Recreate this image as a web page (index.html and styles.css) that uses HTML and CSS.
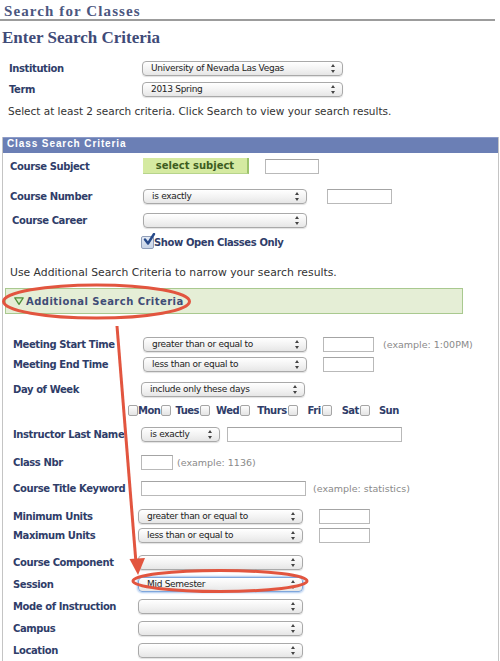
FILE: index.html
```html
<!DOCTYPE html>
<html lang="en">
<head>
    <meta charset="UTF-8">
    <title>Search for Classes</title>
    <link rel="stylesheet" href="styles.css">
</head>
<body>

    <div class="page">
        <h1 class="title">Search for Classes</h1>
        <h2 class="subtitle">Enter Search Criteria</h2>

        <div class="top-form">
            <div class="frow">
                <span class="lbl">Institution</span>
                <div class="sel w201"><span>University of Nevada Las Vegas</span><i class="arr"></i></div>
            </div>
            <div class="frow">
                <span class="lbl">Term</span>
                <div class="sel w201"><span>2013 Spring</span><i class="arr"></i></div>
            </div>
        </div>
        <p class="note">Select at least 2 search criteria. Click Search to view your search results.</p>

        <div class="box">
            <div class="box-head">Class Search Criteria</div>
            <div class="box-body">

                <div class="row">
                    <span class="lbl">Course Subject</span>
                    <div class="btn-green">select subject</div>
                    <div class="inp w54 ml16"></div>
                </div>
                <div class="row sp10">
                    <span class="lbl">Course Number</span>
                    <div class="sel w164"><span>is exactly</span><i class="arr"></i></div>
                    <div class="inp w65 ml20"></div>
                </div>
                <div class="row sp4">
                    <span class="lbl indent">Course Career</span>
                    <div class="sel w164"><span></span><i class="arr"></i></div>
                </div>
                <div class="row sp2">
                    <span class="lbl"></span>
                    <span class="check on">
                        <svg width="14" height="14" viewBox="0 0 14 14"><path d="M3 6.5 L6 10.5 L12 1" fill="none" stroke="#274a8a" stroke-width="2.4" stroke-linecap="round" stroke-linejoin="round"/></svg>
                    </span>
                    <span class="lbl-inline">Show Open Classes Only</span>
                </div>
                <div class="row sp10">
                    <span class="text">Use Additional Search Criteria to narrow your search results.</span>
                </div>

                <div class="more">
                    <svg class="tri" width="10" height="8" viewBox="0 0 10 8"><path d="M0.8 0.8 H9.2 L5 7.3 Z" fill="#d9ecc4" stroke="#4f8f3a" stroke-width="1.3" stroke-linejoin="round"/></svg>
                    <span>Additional Search Criteria</span>
                </div>

                <div class="extra">
                    <div class="row first">
                        <span class="lbl">Meeting Start Time</span>
                        <div class="sel w164"><span>greater than or equal to</span><i class="arr"></i></div>
                        <div class="inp w51 ml16"></div>
                        <span class="hint ml9">(example: 1:00PM)</span>
                    </div>
                    <div class="row sp0">
                        <span class="lbl">Meeting End Time</span>
                        <div class="sel w164"><span>less than or equal to</span><i class="arr"></i></div>
                        <div class="inp w51 ml16"></div>
                    </div>

                    <div class="mid">
                        <div class="row sp5">
                            <span class="lbl">Day of Week</span>
                            <div class="sel w164"><span>include only these days</span><i class="arr"></i></div>
                        </div>
                        <div class="days">
                            <i class="box-cb"></i><b class="d0">Mon</b>
                            <i class="box-cb"></i><b class="d4">Tues</b>
                            <i class="box-cb"></i><b class="d6">Wed</b>
                            <i class="box-cb"></i><b class="d7">Thurs</b>
                            <i class="box-cb"></i><b class="d10">Fri</b>
                            <i class="box-cb"></i><b class="d10">Sat</b>
                            <i class="box-cb"></i><b class="d9">Sun</b>
                        </div>
                        <div class="row sp4">
                            <span class="lbl">Instructor Last Name</span>
                            <div class="sel w79"><span>is exactly</span><i class="arr"></i></div>
                            <div class="inp w175 ml7"></div>
                        </div>
                        <div class="row sp8">
                            <span class="lbl">Class Nbr</span>
                            <div class="inp w32"></div>
                            <span class="hint ml4">(example: 1136)</span>
                        </div>
                        <div class="row sp6">
                            <span class="lbl">Course Title Keyword</span>
                            <div class="inp w165"></div>
                            <span class="hint ml7">(example: statistics)</span>
                        </div>
                    </div>

                    <div class="low">
                        <div class="row sp8">
                            <span class="lbl">Minimum Units</span>
                            <div class="sel w165"><span>greater than or equal to</span><i class="arr"></i></div>
                            <div class="inp w51 ml16"></div>
                        </div>
                        <div class="row tight">
                            <span class="lbl">Maximum Units</span>
                            <div class="sel w165"><span>less than or equal to</span><i class="arr"></i></div>
                            <div class="inp w51 ml16"></div>
                        </div>
                        <div class="row sp7">
                            <span class="lbl">Course Component</span>
                            <div class="sel w165"><span></span><i class="arr"></i></div>
                        </div>
                        <div class="row sp2">
                            <span class="lbl">Session</span>
                            <div class="sel w165 focus"><span>Mid Semester</span><i class="arr"></i></div>
                        </div>
                        <div class="row sp2">
                            <span class="lbl">Mode of Instruction</span>
                            <div class="sel w165"><span></span><i class="arr"></i></div>
                        </div>
                        <div class="row sp2">
                            <span class="lbl">Campus</span>
                            <div class="sel w165"><span></span><i class="arr"></i></div>
                        </div>
                        <div class="row sp2">
                            <span class="lbl">Location</span>
                            <div class="sel w165"><span></span><i class="arr"></i></div>
                        </div>
                    </div>
                </div>

            </div>
        </div>

        <!-- red annotation marks drawn on top of the form -->
        <svg class="marks" width="500" height="661" viewBox="0 0 500 661">
            <ellipse cx="96.5" cy="301.5" rx="93" ry="16.5" fill="none" stroke="#e2553f" stroke-width="3"/>
            <path d="M117 326 L136 563" stroke="#e2553f" stroke-width="3" fill="none"/>
            <path d="M129.5 559 L145 558 L138 575 Z" fill="#e2553f"/>
            <ellipse cx="220" cy="581" rx="87" ry="10.5" fill="none" stroke="#e2553f" stroke-width="3"/>
        </svg>
    </div>

</body>
</html>
```

FILE: styles.css
```css
body{
    margin: 0;
    background: #fff;
    font-family: "DejaVu Sans", Verdana, sans-serif;
    color: #333;
}

.page{
    position: relative;
    width: 500px;
    height: 661px;
    overflow: hidden;
}

.title{
    margin: 0 5px 0 0;
    padding: 3px 0 0 4px;
    height: 16px;
    font: bold 15px "Liberation Serif", serif;
    letter-spacing: 1.1px;
    line-height: 16px;
    color: #4b5680;
    border-bottom: 2px solid #9c9c9c;
}

.subtitle{
    margin: 7px 0 0 2px;
    font: bold 17px "Liberation Serif", serif;
    color: #3f4b78;
    line-height: 20px;
}

.top-form{
    margin-top: 10px;
    padding-left: 9px;
}

.frow{
    display: flex;
    align-items: center;
    height: 20px;
    margin-bottom: 1px;
}

.frow .lbl{
    width: 133px;
}

.lbl{
    flex: none;
    box-sizing: border-box;
    width: 133px;
    font-size: 10px;
    font-weight: bold;
    letter-spacing: -0.4px;
    color: #2f3d69;
}

.lbl.indent{
    padding-left: 2px;
}

.note{
    margin: 2px 0 0 8px;
    font-size: 10.5px;
    color: #333;
    line-height: 20px;
}

/* class search box */

.box{
    margin: 16px 1px 0 2px;
    border: 1px solid #c4c4c4;
    border-bottom: none;
    height: 600px;
}

.box-head{
    height: 15px;
    line-height: 15px;
    padding-left: 4px;
    background: #6b7fb5;
    border-top: 1px solid #8c9bc8;
    margin-top: -1px;
    font: bold 10px "Liberation Sans", Arial, sans-serif;
    letter-spacing: 0.9px;
    color: #fff;
}

.box-body{
    padding: 3px 0 0 7px;
}

.row{
    display: flex;
    align-items: center;
    height: 20px;
}

.sp0{ margin-top: 0; }
.sp2{ margin-top: 2px; }
.sp4{ margin-top: 4px; }
.sp5{ margin-top: 5px; }
.sp6{ margin-top: 6px; }
.sp7{ margin-top: 7px; }
.sp8{ margin-top: 8px; }
.sp10{ margin-top: 10px; }
.tight{ margin-top: -1px; }
.row.first{ margin-top: 20px; }

.extra .lbl{ padding-left: 3px; }
.mid .lbl{ width: 131px; }
.low .lbl{ width: 128px; }

.ml4{ margin-left: 4px; }
.ml7{ margin-left: 7px; }
.ml9{ margin-left: 9px; }
.ml16{ margin-left: 16px; }
.ml20{ margin-left: 20px; }

/* controls */

.sel{
    flex: none;
    display: flex;
    align-items: center;
    justify-content: space-between;
    box-sizing: border-box;
    height: 15px;
    padding: 0 6px 0 8px;
    border: 1px solid #a9a9a9;
    border-radius: 4px;
    background: linear-gradient(#ffffff, #f1f1f1 60%, #e6e6e6);
    box-shadow: 0 1px 1px rgba(0,0,0,0.12);
    font-size: 9px;
    letter-spacing: -0.3px;
    color: #222;
    white-space: nowrap;
    overflow: hidden;
}

.sel.focus{
    border-color: #7ea6dc;
    box-shadow: 0 0 2px 1px #a8c6ee;
}

.arr{
    width: 5px;
    height: 9px;
    position: relative;
}

.arr::before,
.arr::after{
    content: '';
    position: absolute;
    left: 0;
    border-left: 2.5px solid transparent;
    border-right: 2.5px solid transparent;
}

.arr::before{
    top: 0;
    border-bottom: 3px solid #444;
}

.arr::after{
    bottom: 0;
    border-top: 3px solid #444;
}

.inp{
    flex: none;
    box-sizing: border-box;
    height: 15px;
    border: 1px solid #b9b9b9;
    border-top-color: #a4a4a4;
    background: #fff;
}

.w32{ width: 32px; }
.w51{ width: 51px; }
.w54{ width: 54px; }
.w65{ width: 65px; }
.w79{ width: 79px; }
.w164{ width: 164px; }
.w165{ width: 165px; }
.w175{ width: 175px; }
.w201{ width: 201px; }

.btn-green{
    flex: none;
    box-sizing: border-box;
    width: 106px;
    height: 16px;
    line-height: 15px;
    text-align: center;
    background: #d5eaa1;
    border-right: 2px solid #9cc36b;
    border-bottom: 1px solid #b7d48c;
    font-size: 10px;
    font-weight: bold;
    color: #3d5d1f;
}

.check{
    flex: none;
    width: 11px;
    height: 11px;
    margin-left: -2px;
    border: 1px solid #8f9db8;
    border-radius: 2px;
    background: linear-gradient(#e4ebf5, #c7d3e6);
    position: relative;
}

.check svg{
    position: absolute;
    left: 0;
    top: -4px;
}

.lbl-inline{
    margin-left: 0;
    font-size: 10px;
    font-weight: bold;
    letter-spacing: -0.4px;
    color: #2f3d69;
}

.text{
    font-size: 10.8px;
    color: #333;
}

.hint{
    font-size: 9.5px;
    color: #8a8a8a;
}

.more{
    display: flex;
    align-items: center;
    box-sizing: border-box;
    width: 458px;
    height: 26px;
    margin: 6px 0 0 -5px;
    padding-left: 8px;
    background: #e5eed6;
    border: 1px solid #a9c98f;
    font: bold 10px "DejaVu Sans", sans-serif;
    letter-spacing: 0.45px;
    color: #3f4c76;
}

.more .tri{
    margin-right: 2px;
}

.days{
    display: flex;
    align-items: center;
    height: 20px;
    margin-top: 1px;
    padding-left: 118px;
}

.days b{
    margin-right: 1px;
    font-size: 10px;
    letter-spacing: -0.5px;
    color: #2f3d69;
}

.days .d0{ margin-left: 0; }
.days .d4{ margin-left: 4px; }
.days .d6{ margin-left: 6px; }
.days .d7{ margin-left: 7px; }
.days .d9{ margin-left: 9px; }
.days .d10{ margin-left: 10px; }

.box-cb{
    display: block;
    flex: none;
    box-sizing: border-box;
    width: 10px;
    height: 11px;
    border: 1px solid #a5a5a5;
    border-radius: 2px;
    background: linear-gradient(#fdfdfd, #e4e4e4);
}

.marks{
    position: absolute;
    left: 0;
    top: 0;
    pointer-events: none;
}
```
